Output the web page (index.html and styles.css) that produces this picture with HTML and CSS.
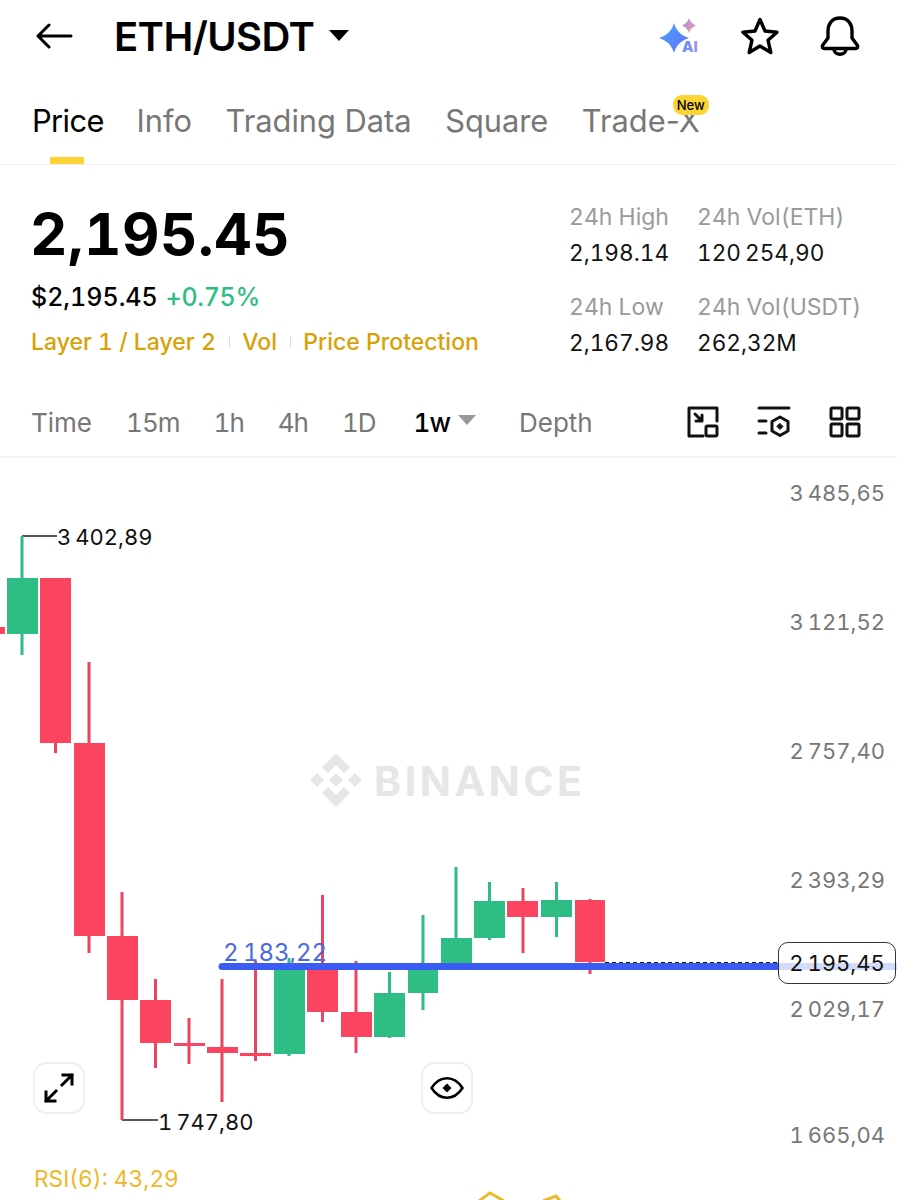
FILE: index.html
```html
<!DOCTYPE html>
<html lang="en">
  <head>
    <meta charset="UTF-8" />
    <meta name="viewport" content="width=device-width, initial-scale=1.0" />
    <title>ETH/USDT</title>
    <link rel="stylesheet" href="styles.css">
  </head>
  <body>
    <div class="app">
      <header class="top-bar">
        <svg class="back" width="38" height="28" viewBox="0 0 38 28" fill="none" stroke="#000" stroke-width="3" stroke-linecap="round" stroke-linejoin="round">
          <path d="M2 14H35M13 3L2 14L13 25" />
        </svg>
        <div class="pair">ETH/USDT</div>
        <span class="pair-caret"></span>
        <div class="top-icons">
          <svg class="ai-icon" width="46" height="40" viewBox="0 -2 46 40">
            <defs>
              <linearGradient id="aiBlue" x1="0" y1="0" x2="1" y2="1">
                <stop offset="0" stop-color="#3fa9f5" />
                <stop offset="1" stop-color="#6a6cff" />
              </linearGradient>
              <linearGradient id="aiPink" x1="0" y1="0" x2="1" y2="1">
                <stop offset="0" stop-color="#a98cf5" />
                <stop offset="1" stop-color="#f0a090" />
              </linearGradient>
              <linearGradient id="aiText" x1="0" y1="0" x2="1" y2="0">
                <stop offset="0" stop-color="#5a8cf5" />
                <stop offset="1" stop-color="#a58cf0" />
              </linearGradient>
            </defs>
            <path fill="url(#aiBlue)" d="M16 5C18 12 22 17 31 20C22 23 18 28 16 35C14 28 10 23 1 20C10 17 14 12 16 5Z" />
            <path fill="url(#aiPink)" d="M31 0C32 3.500 34 5.500 38 7.500C34 9.500 32 11.500 31 15C30 11.500 28 9.500 24 7.500C28 5.500 30 3.500 31 0Z" />
            <text class="ai-text" x="24" y="34" fill="url(#aiText)">AI</text>
          </svg>
          <svg width="40" height="38" viewBox="0 0 40 38" fill="none" stroke="#000" stroke-width="3.4" stroke-linejoin="round">
            <path d="M20 2.500L25 14L37 15.200L28 23.200L30.800 35.500L20 29L9.200 35.500L12 23.200L3 15.200L15 14Z" />
          </svg>
          <svg width="40" height="40" viewBox="0 0 40 40" fill="none" stroke="#000" stroke-width="3.4" stroke-linejoin="round">
            <path d="M20 2C12 2 8 8 8 15V22L2.500 29.500C2 31 2.500 32.500 4.500 32.500H35.500C37.500 32.500 38 31 37.500 29.500L32 22V15C32 8 28 2 20 2Z" />
            <path d="M14 33C14 40 26 40 26 33" />
          </svg>
        </div>
      </header>

      <nav class="tabs">
        <a class="tab active">Price</a>
        <a class="tab">Info</a>
        <a class="tab">Trading Data</a>
        <a class="tab">Square</a>
        <a class="tab">Trade-X<span class="new-badge">New</span></a>
      </nav>

      <section class="summary">
        <div class="summary-main">
          <div class="last-price">2,195.45</div>
          <div class="fiat-row">$2,195.45 <span class="change">+0.75%</span></div>
          <div class="tags">
            <span>Layer 1 / Layer 2</span>
            <i></i>
            <span>Vol</span>
            <i></i>
            <span>Price Protection</span>
          </div>
        </div>
        <div class="stats">
          <div class="stat"><label>24h High</label><b>2,198.14</b></div>
          <div class="stat"><label>24h Vol(ETH)</label><b>120&#8239;254,90</b></div>
          <div class="stat"><label>24h Low</label><b>2,167.98</b></div>
          <div class="stat"><label>24h Vol(USDT)</label><b>262,32M</b></div>
        </div>
      </section>

      <div class="intervals">
        <span>Time</span>
        <span class="num">15m</span>
        <span class="num">1h</span>
        <span class="num">4h</span>
        <span class="num">1D</span>
        <span class="num current">1w<em></em></span>
        <span class="depth">Depth</span>
        <div class="tool-icons">
          <svg width="32" height="32" viewBox="0 0 32 32" fill="none" stroke="#111" stroke-width="3" stroke-linecap="round" stroke-linejoin="round">
            <path d="M16 30H2V2H30V15" />
            <path d="M8 8L15 15M15 9V15H9" />
            <rect x="19" y="20" width="11" height="10" rx="1.500" />
          </svg>
          <svg width="34" height="32" viewBox="0 0 34 32" fill="none" stroke="#111" stroke-width="3" stroke-linecap="round" stroke-linejoin="round">
            <path d="M2 2H32M2 15H9M2 27H9" />
            <path d="M23 11L31 15.500V25L23 29.500L15 25V15.500Z" />
            <path d="M23 17.500L26 20.500L23 23.500L20 20.500Z" fill="#111" stroke-width="1" />
          </svg>
          <svg width="32" height="32" viewBox="0 0 32 32" fill="none" stroke="#111" stroke-width="3" stroke-linejoin="round">
            <rect x="2" y="2" width="11" height="11" rx="1.500" />
            <rect x="18" y="2" width="12" height="11" rx="1.500" />
            <rect x="2" y="18" width="11" height="12" rx="1.500" />
            <rect x="18" y="18" width="12" height="12" rx="1.500" />
          </svg>
        </div>
      </div>

      <main class="chart">
        <svg class="plot" width="897" height="742" viewBox="0 458 897 742">
          <!-- watermark -->
          <g fill="#e6e6e6">
            <path d="M336 753L350 767L344 773L336 765L328 773L322 767Z" />
            <path d="M336 807L350 793L344 787L336 795L328 787L322 793Z" />
            <path d="M317 773L324 780L317 787L310 780Z" />
            <path d="M355 773L362 780L355 787L348 780Z" />
            <path d="M336 773L343 780L336 787L329 780Z" />
          </g>

          <!-- high / low leaders -->
          <path class="leader" d="M22 536H57M122 1120H158" />

          <!-- wicks -->
          <g class="up-wick">
            <path d="M22 536V655M289 958V1056M389.500 972V1038M423 915V1010M456 867V940M489.500 882V940M556.500 882V937" />
          </g>
          <g class="down-wick">
            <path d="M55.500 578V753M89 662V953M122 892V1120M155.500 979V1068M189 1018V1064M222 979V1102M255.500 961V1061M322.500 895V1022M356 961V1053M523 888V953M590 899V974" />
          </g>

          <!-- bodies -->
          <g class="up">
            <rect x="7" y="578" width="31" height="56" />
            <rect x="274" y="966" width="31" height="88" />
            <rect x="374" y="993" width="31" height="44" />
            <rect x="408" y="966" width="30" height="27" />
            <rect x="441" y="938" width="31" height="28" />
            <rect x="474" y="901" width="31" height="37" />
            <rect x="541" y="900" width="31" height="17" />
          </g>
          <g class="down">
            <rect x="0" y="627" width="5" height="7" />
            <rect x="40" y="578" width="31" height="165" />
            <rect x="74" y="743" width="31" height="193" />
            <rect x="107" y="936" width="31" height="64" />
            <rect x="140" y="1000" width="31" height="43" />
            <rect x="174" y="1043" width="31" height="3" />
            <rect x="207" y="1047" width="31" height="6" />
            <rect x="240" y="1053" width="31" height="3" />
            <rect x="307" y="966" width="31" height="46" />
            <rect x="341" y="1012" width="31" height="25" />
            <rect x="507" y="901" width="31" height="16" />
            <rect x="575" y="900" width="30" height="62" />
          </g>

          <!-- drawn line and last price -->
          <path class="trend" d="M222 966.500H780" />
          <path class="trend-pale" d="M778 966.500H897" />
          <path class="last-dash" d="M605 962.500H778" />

          <!-- next panel logo, cut off by the screen -->
          <path class="cut-logo" d="M479 1201L490 1193L504 1201M543 1201L556 1196L560 1201" />
        </svg>

        <div class="watermark">BINANCE</div>
        <div class="drawn-label">2&#8239;183,22</div>
        <div class="mark high">3&#8239;402,89</div>
        <div class="mark low">1&#8239;747,80</div>

        <div class="axis">
          <span>3&#8239;485,65</span>
          <span>3&#8239;121,52</span>
          <span>2&#8239;757,40</span>
          <span>2&#8239;393,29</span>
          <span>2&#8239;029,17</span>
          <span class="axis-last">1&#8239;665,04</span>
        </div>
        <div class="last-tag">2&#8239;195,45</div>

        <button class="chart-btn expand">
          <svg width="32" height="32" viewBox="0 0 32 32" fill="none" stroke="#000" stroke-width="3" stroke-linecap="square">
            <path d="M19 13L29 3M20 3H29V12M13 19L3 29M3 20V29H12" />
          </svg>
        </button>
        <button class="chart-btn eye">
          <svg width="34" height="24" viewBox="0 0 34 24" fill="none" stroke="#000" stroke-width="2.600" stroke-linejoin="round">
            <path d="M1.500 12C10 -1 24 -1 32.500 12C24 25 10 25 1.500 12Z" />
            <path d="M17 7.500L21.500 12L17 16.500L12.500 12Z" fill="#000" stroke="none" />
          </svg>
        </button>

        <div class="rsi">RSI(6): 43,29</div>
      </main>
    </div>
  </body>
</html>
```

FILE: styles.css
```css
* {
  margin: 0;
  padding: 0;
  box-sizing: border-box;
  font-family: "Inter", "Liberation Sans", sans-serif;
  font-variant-numeric: tabular-nums;
}

body {
  background: #ffffff;
  color: #000000;
  overflow: hidden;
}

.app {
  width: 897px;
  height: 1200px;
  overflow: hidden;
}

.top-bar {
  height: 72px;
  display: flex;
  align-items: center;
  padding-left: 36px;
}

.pair {
  margin-left: 40px;
  font-size: 40px;
  font-weight: 600;
  letter-spacing: -0.6px;
}

.pair-caret {
  margin-left: 15px;
  margin-top: -2px;
  border-left: 10px solid transparent;
  border-right: 10px solid transparent;
  border-top: 11px solid #000000;
}

.top-icons {
  margin-left: auto;
  margin-right: 37px;
  display: flex;
  align-items: center;
  gap: 40px;
}

.ai-icon {
  margin-right: -4px;
}

.ai-text {
  font-size: 15px;
  font-weight: 800;
}

.tabs {
  height: 93px;
  display: flex;
  gap: 33.500px;
  padding: 22px 0 0 32px;
  border-bottom: 1px solid #eeeeee;
}

.tab {
  position: relative;
  font-size: 30.800px;
  font-variant-numeric: normal;
  line-height: 54px;
  height: 54px;
  color: #777777;
}

.tab.active {
  margin-right: -0.700px;
  color: #000000;
  letter-spacing: -0.6px;
}

.tab.active::after {
  content: "";
  position: absolute;
  left: 18px;
  top: 63px;
  width: 34px;
  height: 7px;
  background: #fcd535;
}

.new-badge {
  position: absolute;
  right: -9px;
  top: 1px;
  height: 20px;
  padding: 0 4px;
  border-radius: 9px;
  background: #fcd535;
  color: #000000;
  font-size: 13px;
  font-weight: 500;
  line-height: 20px;
}

.summary {
  height: 227px;
  display: flex;
  padding: 0 32px 0 32px;
}

.summary-main {
  flex: 1;
}

.last-price {
  margin-top: 33px;
  margin-left: -2px;
  font-size: 58px;
  font-weight: 700;
  line-height: 72px;
  letter-spacing: 0.5px;
}

.fiat-row {
  margin-top: 11px;
  margin-left: -1px;
  font-size: 25px;
  line-height: 32px;
  font-weight: 500;
}

.change {
  margin-left: 1px;
  color: #2ebd85;
  letter-spacing: -0.3px;
}

.tags {
  margin-top: 13px;
  margin-left: -1px;
  display: flex;
  align-items: center;
  gap: 12.700px;
  font-size: 23px;
  font-weight: 500;
  line-height: 32px;
  color: #d8a106;
}

.tags i {
  width: 1px;
  height: 12px;
  background: #dddddd;
}

.stats {
  margin-top: 36px;
  margin-right: -4px;
  display: grid;
  grid-template-columns: 128px 172px;
  grid-auto-rows: 90px;
}

.stat label {
  display: block;
  font-size: 23px;
  line-height: 32px;
  color: #9a9a9a;
}

.stat b {
  display: block;
  margin-top: 4px;
  font-size: 22.600px;
  line-height: 32px;
  font-weight: 400;
  color: #111111;
}

.intervals {
  height: 66px;
  display: flex;
  align-items: center;
  gap: 34px;
  padding: 0 36px 4px 31px;
  border-bottom: 2px solid #f3f3f3;
  font-size: 26px;
  color: #777777;
}

.intervals .num {
  letter-spacing: -1px;
}

.intervals .current {
  margin-left: 4px;
  display: flex;
  align-items: center;
  gap: 8px;
  color: #000000;
  font-weight: 500;
}

.intervals .current em {
  border-left: 9px solid transparent;
  border-right: 9px solid transparent;
  border-top: 10px solid #999999;
  margin-top: -4px;
}

.intervals .depth {
  margin-left: 9px;
}

.tool-icons {
  margin-left: auto;
  display: flex;
  align-items: center;
  gap: 38px;
}

.chart {
  position: relative;
  height: 742px;
}

.plot {
  position: absolute;
  left: 0;
  top: 0;
}

.up {
  fill: #2ebd85;
}

.down {
  fill: #fb4560;
}

.up-wick path {
  stroke: #2ebd85;
  stroke-width: 3;
  fill: none;
}

.down-wick path {
  stroke: #ea4560;
  stroke-width: 3;
  fill: none;
}

.leader {
  stroke: #222222;
  stroke-width: 1.500;
  fill: none;
}

.trend {
  stroke: #3a5cf5;
  stroke-width: 7;
  stroke-linecap: round;
  fill: none;
}

.trend-pale {
  stroke: #d3dbfb;
  stroke-width: 7;
  fill: none;
}

.last-dash {
  stroke: #111111;
  stroke-width: 1;
  stroke-dasharray: 4 3;
  fill: none;
}

.cut-logo {
  stroke: #ecb92c;
  stroke-width: 3;
  fill: none;
}

.watermark {
  position: absolute;
  left: 374px;
  top: 298px;
  font-size: 41px;
  line-height: 50px;
  font-weight: 700;
  letter-spacing: 3.500px;
  color: #e6e6e6;
}

.drawn-label {
  position: absolute;
  left: 223px;
  top: 479px;
  font-size: 24px;
  line-height: 32px;
  color: #4a6ae0;
}

.mark {
  position: absolute;
  font-size: 22px;
  line-height: 32px;
  color: #111111;
}

.mark.high {
  left: 57px;
  top: 63px;
}

.mark.low {
  left: 158px;
  top: 648px;
}

.axis {
  position: absolute;
  right: 12px;
  top: 19px;
  display: flex;
  flex-direction: column;
  align-items: flex-end;
  gap: 97px;
  font-size: 22px;
  line-height: 32px;
  color: #777777;
}

.axis-last {
  margin-top: -3px;
}

.last-tag {
  position: absolute;
  left: 778px;
  top: 484px;
  width: 118px;
  height: 42px;
  border: 1.500px solid #333333;
  border-radius: 10px;
  font-size: 22px;
  line-height: 40px;
  text-align: center;
  color: #111111;
}

.chart-btn {
  position: absolute;
  top: 604px;
  width: 52px;
  height: 52px;
  display: flex;
  align-items: center;
  justify-content: center;
  border: 2px solid #efefef;
  border-radius: 14px;
  background: #ffffff;
}

.chart-btn.expand {
  left: 33px;
}

.chart-btn.eye {
  left: 421px;
}

.rsi {
  position: absolute;
  left: 34px;
  top: 705px;
  font-size: 22.700px;
  line-height: 32px;
  color: #ecb92c;
}
```
